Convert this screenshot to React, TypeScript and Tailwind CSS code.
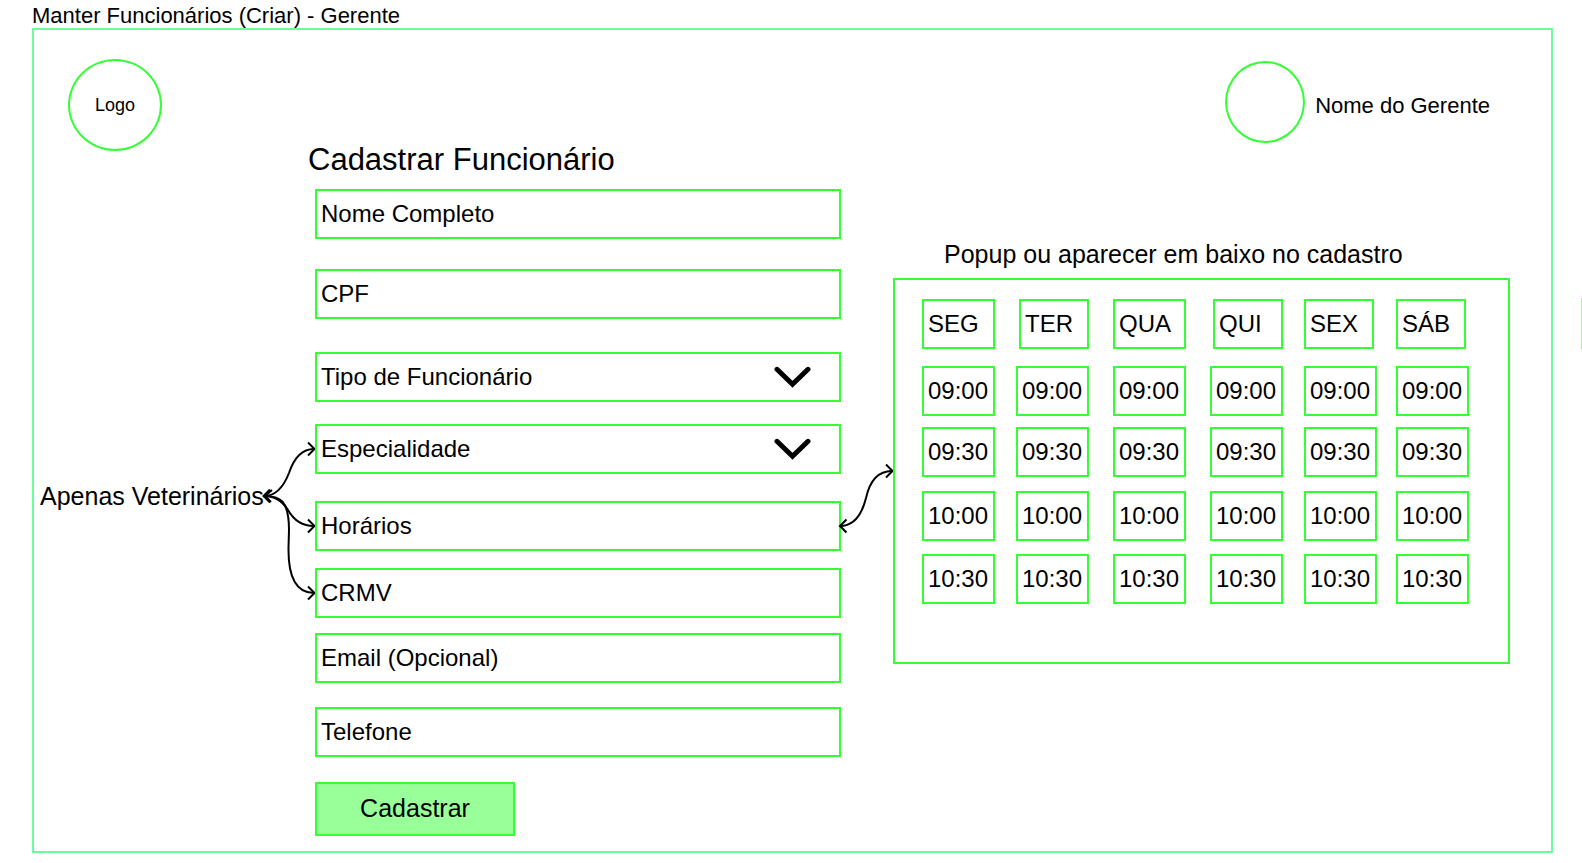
type FieldSpec = {
  id: string;
  label: string;
  kind: "text" | "select";
  gap: string;
};

const fields: FieldSpec[] = [
  { id: "nome", label: "Nome Completo", kind: "text", gap: "mt-[11px]" },
  { id: "cpf", label: "CPF", kind: "text", gap: "mt-[30px]" },
  { id: "tipo", label: "Tipo de Funcionário", kind: "select", gap: "mt-[33px]" },
  { id: "especialidade", label: "Especialidade", kind: "select", gap: "mt-[22px]" },
  { id: "horarios", label: "Horários", kind: "text", gap: "mt-[27px]" },
  { id: "crmv", label: "CRMV", kind: "text", gap: "mt-[17px]" },
  { id: "email", label: "Email (Opcional)", kind: "text", gap: "mt-[15px]" },
  { id: "telefone", label: "Telefone", kind: "text", gap: "mt-6" },
];

const days = [
  { name: "SEG", col: "w-[94px]", box: "w-[73px]" },
  { name: "TER", col: "w-[97px]", box: "ml-[3px] w-[70px]" },
  { name: "QUA", col: "w-[97px]", box: "w-[73px]" },
  { name: "QUI", col: "w-[94px]", box: "ml-[3px] w-[70px]" },
  { name: "SEX", col: "w-[92px]", box: "w-[70px]" },
  { name: "SÁB", col: "w-[73px]", box: "w-[70px]" },
];

const slots = [
  { time: "09:00", gap: "pt-[17px]" },
  { time: "09:30", gap: "pt-[11px]" },
  { time: "10:00", gap: "pt-[14px]" },
  { time: "10:30", gap: "pt-[13px]" },
];

function Chevron() {
  return (
    <svg
      className="pointer-events-none absolute top-1/2 right-[30px] h-[22px] w-[37px] -translate-y-1/2"
      viewBox="0 0 37 22"
      fill="none"
      stroke="#000"
      strokeWidth="5"
      strokeLinecap="round"
      aria-hidden="true"
    >
      <path d="M3 3.3 L18.5 18.3 L34 3.3" />
    </svg>
  );
}

function Field({ id, label, kind, gap }: FieldSpec) {
  if (kind === "select") {
    return (
      <div className={`relative ${gap}`}>
        <select
          id={id}
          aria-label={label}
          className="block h-[50px] w-full appearance-none border-2 border-[#33ff33] bg-white pl-1 text-2xl text-black outline-none"
        >
          <option>{label}</option>
        </select>
        <Chevron />
      </div>
    );
  }
  return (
    <input
      id={id}
      type="text"
      aria-label={label}
      placeholder={label}
      className={`block h-[50px] w-full border-2 border-[#33ff33] bg-white pl-1 text-2xl text-black outline-none placeholder:text-black placeholder:opacity-100 ${gap}`}
    />
  );
}

function VetConnectors() {
  return (
    <svg
      className="h-[200px] w-[50px] shrink-0 overflow-visible"
      viewBox="0 0 50 200"
      fill="none"
      stroke="#000"
      strokeWidth="2"
      aria-hidden="true"
    >
      <path d="M-1 100 Q15 100 24 77 Q32 53 49 53" />
      <path d="M-1 100 Q14 100 23 114 Q32 130 49 130" />
      <path d="M-1 100 C15 100 24 104 24 134 L23.5 152 Q23 197 49 197" />
      <path d="M5 93.5 L-1.5 100 L5 106.5 M7 94 L0 100 L6 106" />
      <path d="M43 46.5 L49.5 53 L43 59.5" />
      <path d="M43 123.5 L49.5 130 L43 136.5" />
      <path d="M43 190.5 L49.5 197 L43 203.5" />
    </svg>
  );
}

function ScheduleConnector() {
  return (
    <svg
      className="mt-[317px] h-20 w-[52px] shrink-0 overflow-visible"
      viewBox="0 0 52 80"
      fill="none"
      stroke="#000"
      strokeWidth="2"
      aria-hidden="true"
    >
      <path d="M-1 68 Q18 68 25 40 Q31 13 51 13" />
      <path d="M5.5 61.5 L-1 68 L5.5 74.5" />
      <path d="M45 6.5 L51.5 13 L45 19.5" />
    </svg>
  );
}

function Schedule() {
  return (
    <section className="mr-[41px] w-[617px] shrink-0 pt-[98px]">
      <h2 className="pl-[51px] text-[25px] leading-[30px]">
        Popup ou aparecer em baixo no cadastro
      </h2>
      <div className="mt-[9px] border-2 border-[#33ff33] pt-[19px] pb-[58px] pl-[27px]">
        <table className="table-fixed border-collapse text-2xl">
          <colgroup>
            {days.map((d) => (
              <col key={d.name} className={d.col} />
            ))}
          </colgroup>
          <thead>
            <tr>
              {days.map((d) => (
                <th key={d.name} scope="col" className="p-0 text-left font-normal">
                  <div
                    className={`flex h-[50px] items-center border-2 border-[#33ff33] pl-1 ${d.box}`}
                  >
                    {d.name}
                  </div>
                </th>
              ))}
            </tr>
          </thead>
          <tbody>
            {slots.map((s) => (
              <tr key={s.time}>
                {days.map((d) => (
                  <td key={d.name} className={`p-0 ${s.gap}`}>
                    <button
                      type="button"
                      className="block h-[50px] w-[73px] border-2 border-[#33ff33] pl-1 text-left"
                    >
                      {s.time}
                    </button>
                  </td>
                ))}
              </tr>
            ))}
          </tbody>
        </table>
      </div>
    </section>
  );
}

export default function App() {
  return (
    <div className="relative flex min-h-screen flex-col overflow-hidden bg-white pr-[29px] pb-[10px] pl-8 font-['Liberation_Sans',Arial,sans-serif] text-black">
      <p className="pt-1 text-[22px] leading-6">Manter Funcionários (Criar) - Gerente</p>

      <div className="flex-1 border-2 border-[#66ff99]">
        <header className="flex items-start justify-between pt-[29px] pr-[61px] pl-[34px]">
          <div className="flex h-[92px] w-[94px] items-center justify-center rounded-[50%] border-2 border-[#33ff33] text-lg">
            Logo
          </div>
          <div className="flex items-center gap-[10px] pt-[2px]">
            <div className="h-[82px] w-20 rounded-[50%] border-2 border-[#33ff33]" />
            <span className="pt-[6px] text-[22px]">Nome do Gerente</span>
          </div>
        </header>

        <main className="-mt-[10px] flex items-start">
          <aside className="flex w-[281px] shrink-0 items-center justify-between pt-[255px] pl-[6px]">
            <span className="text-[25px] leading-[30px] whitespace-nowrap">
              Apenas Veterinários
            </span>
            <VetConnectors />
          </aside>

          <form className="min-w-0 flex-1" onSubmit={(e) => e.preventDefault()}>
            <h1 className="-ml-[7px] pt-px text-[31px] leading-9">Cadastrar Funcionário</h1>
            {fields.map((f) => (
              <Field key={f.id} {...f} />
            ))}
            <button
              type="submit"
              className="mt-[25px] block h-[54px] w-[200px] border-2 border-[#33ff33] bg-[#99ff99] text-[25px]"
            >
              Cadastrar
            </button>
          </form>

          <ScheduleConnector />
          <Schedule />
        </main>
      </div>

      <div className="absolute top-[298px] right-0 h-[51px] w-px bg-[#99ff99]" />
    </div>
  );
}
